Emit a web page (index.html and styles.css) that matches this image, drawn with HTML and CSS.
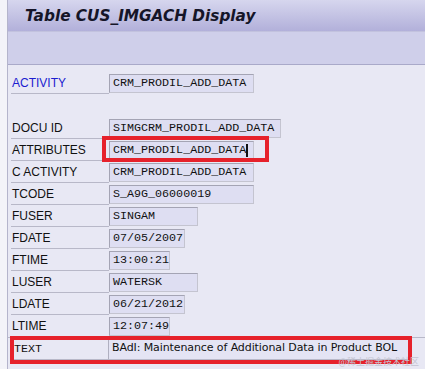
FILE: index.html
```html
<!DOCTYPE html>
<html>
<head>
<meta charset="utf-8">
<link rel="stylesheet" href="styles.css">
</head>
<body>
<div class="frame">
  <div class="titlebar"><h1>Table CUS_IMGACH Display</h1></div>
  <div class="toolbar"></div>
  <div class="content">
    <div class="row first">
      <div class="label blue">ACTIVITY</div>
      <div class="field w145">CRM_PRODIL_ADD_DATA</div>
    </div>
    <div class="spacer"></div>
    <div class="row">
      <div class="label">DOCU ID</div>
      <div class="field w172">SIMGCRM_PRODIL_ADD_DATA</div>
    </div>
    <div class="row">
      <div class="label">ATTRIBUTES</div>
      <div class="field w145">CRM_PRODIL_ADD_DATA<span class="cursor"></span></div>
      <div class="mark mark1"></div>
    </div>
    <div class="row">
      <div class="label">C ACTIVITY</div>
      <div class="field w145">CRM_PRODIL_ADD_DATA</div>
    </div>
    <div class="row">
      <div class="label">TCODE</div>
      <div class="field w145">S_A9G_06000019</div>
    </div>
    <div class="row">
      <div class="label">FUSER</div>
      <div class="field w89">SINGAM</div>
    </div>
    <div class="row">
      <div class="label">FDATE</div>
      <div class="field w76">07/05/2007</div>
    </div>
    <div class="row">
      <div class="label">FTIME</div>
      <div class="field w61">13:00:21</div>
    </div>
    <div class="row">
      <div class="label">LUSER</div>
      <div class="field w89">WATERSK</div>
    </div>
    <div class="row">
      <div class="label">LDATE</div>
      <div class="field w76">06/21/2012</div>
    </div>
    <div class="row">
      <div class="label">LTIME</div>
      <div class="field w61">12:07:49</div>
    </div>
    <div class="row textrow">
      <div class="label mono">TEXT</div>
      <div class="textval">BAdI: Maintenance of Additional Data in Product BOL</div>
      <div class="mark mark2"></div>
    </div>
    <div class="watermark">@稀土掘金技术社区</div>
  </div>
</div>
</body>
</html>
```

FILE: styles.css
```css
html, body {
  margin: 0;
  padding: 0;
  background: #f3f3f9;
  width: 425px;
  height: 369px;
  overflow: hidden;
}
.frame {
  margin-left: 7px;
  border-left: 1px solid #b4b4cc;
  height: 369px;
  background: #e8e8f4;
}
.titlebar {
  height: 31px;
  background: linear-gradient(#d6d6ee, #b2b0da);
  display: flex;
  align-items: center;
}
.titlebar h1 {
  margin: 0 0 0 17px;
  font-family: "DejaVu Sans", sans-serif;
  font-style: italic;
  font-weight: bold;
  font-size: 15.3px;
  color: #151528;
}
.toolbar {
  height: 32px;
  background: #cfcfea;
  border-top: 1px solid #c2c2de;
  border-bottom: 1px solid #a9a9c9;
}
.content {
  position: relative;
  padding-top: 7px;
  background: #e8e8f4;
}
.row {
  position: relative;
  display: flex;
  align-items: center;
  height: 22px;
}
.label {
  box-sizing: border-box;
  width: 98px;
  height: 22px;
  margin-left: 3px;
  padding-left: 1px;
  padding-top: 4px;
  border-bottom: 1px solid #b8b8c8;
  font-family: "Liberation Sans", Arial, sans-serif;
  font-size: 12px;
  color: #111;
}
.label.blue { color: #1c1cd0; }
.label.mono {
  font-family: "Liberation Mono", monospace;
  font-size: 11.7px;
  padding-left: 3px;
}
.spacer { height: 23px; }
.field {
  box-sizing: border-box;
  height: 19px;
  border: 1px solid #a4a4b4;
  border-right-color: #c4c4d0;
  border-bottom-color: #c4c4d0;
  background: #dedef2;
  font-family: "Liberation Mono", "Courier New", monospace;
  font-size: 11.7px;
  line-height: 17px;
  padding-left: 3px;
  color: #111;
  white-space: nowrap;
  display: flex;
  align-items: center;
}
.w145 { width: 145px; }
.w172 { width: 172px; }
.w89 { width: 89px; }
.w76 { width: 76px; }
.w61 { width: 61px; }
.cursor {
  display: inline-block;
  width: 2px;
  height: 13px;
  background: #111;
}
.textrow {
  border-top: 1px solid #b8b8c8;
}
.textrow .label { border-right: 1px solid #b0b0c0; }
.textval {
  box-sizing: border-box;
  height: 22px;
  width: 300px;
  padding-left: 3px;
  padding-top: 3px;
  border-bottom: 1px solid #b8b8c8;
  background: #e4e4f4;
  font-family: "DejaVu Sans", sans-serif;
  font-size: 11px;
  line-height: 14px;
  color: #111;
  white-space: nowrap;
  letter-spacing: -0.1px;
}
.mark {
  position: absolute;
  border: 4px solid #e6212b;
  box-sizing: border-box;
}
.mark1 {
  left: 94px;
  top: -3px;
  width: 167px;
  height: 26px;
}
.mark2 {
  left: 2px;
  top: -2px;
  width: 402px;
  height: 28px;
}
.watermark {
  position: absolute;
  right: 6px;
  top: 292px;
  font-family: "Noto Sans CJK SC", sans-serif;
  font-size: 9px;
  line-height: 10px;
  color: #c4c4d2;
}
```
